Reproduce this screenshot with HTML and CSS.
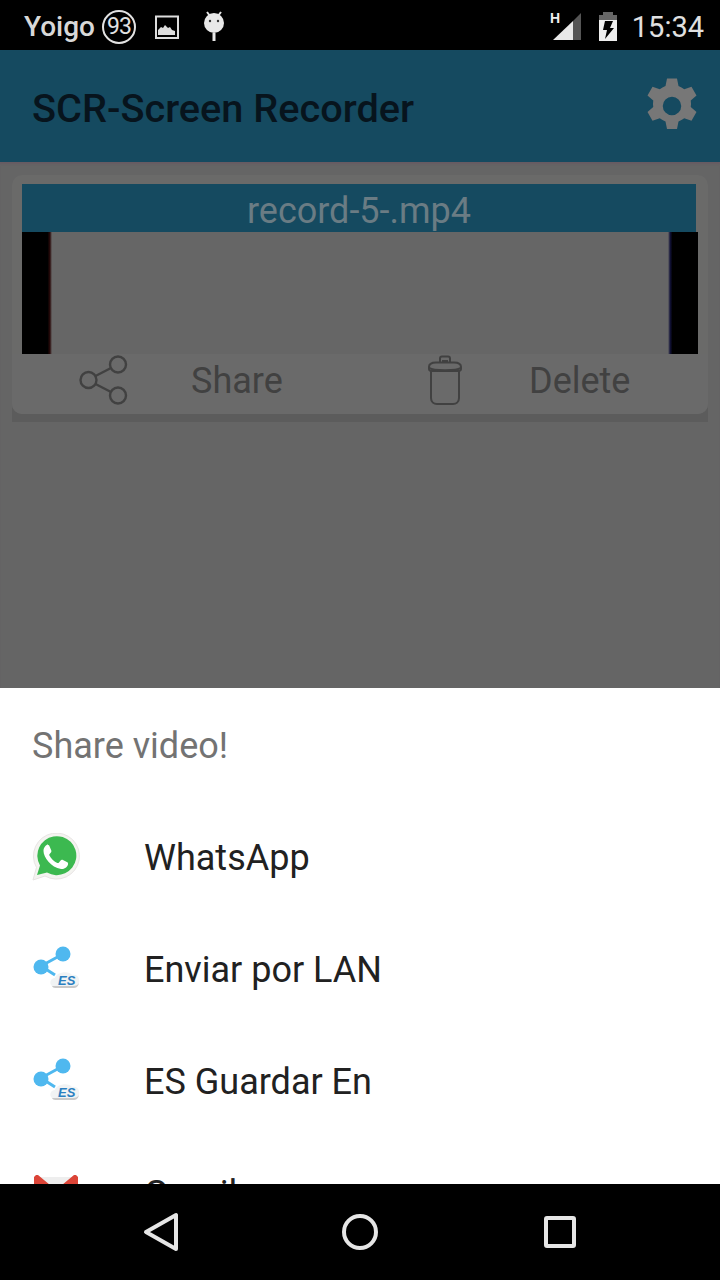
FILE: index.html
```html
<!DOCTYPE html>
<html lang="en">
<head>
<meta charset="utf-8">
<title>SCR-Screen Recorder</title>
<link rel="stylesheet" href="styles.css">
</head>
<body>
<div class="screen">
  <header class="status">
    <div class="status-left">
      <span class="carrier">Yoigo</span>
      <span class="badge">93</span>
      <svg class="ic-pic" width="24" height="24" viewBox="0 0 24 24"><rect x="1" y="1.500" width="22" height="21.500" fill="none" stroke="#ddd" stroke-width="2"/><path d="M3 20v-5l3-3 2 1 2-3 3 3 2-1 2 3 3 1v4z" fill="#ddd"/></svg>
      <svg class="ic-droid" width="24" height="32" viewBox="0 0 24 32"><path d="M5 1l3 4M19 1l-3 4" stroke="#e4e4e4" stroke-width="2"/><circle cx="12" cy="12" r="10" fill="#e8e8e8"/><circle cx="8" cy="10" r="1.200" fill="#333"/><circle cx="16" cy="10" r="1.200" fill="#333"/><rect x="10.500" y="22" width="3" height="8" fill="#e8e8e8"/></svg>
    </div>
    <div class="status-right">
      <svg class="ic-signal" width="32" height="34" viewBox="0 -4 32 34"><text x="0" y="11" class="h-mark">H</text><path d="M3 28L23 9v19z" fill="#e8e8e8"/><path d="M23 9l8-8v27h-8z" fill="#555"/></svg>
      <svg class="ic-batt" width="20" height="30" viewBox="0 0 20 30"><path d="M5 0h10v3H5zM1 3h18v5H1z" fill="#666"/><rect x="1" y="8" width="18" height="21" fill="#eee"/><path d="M7 9h8l-3 7h4L7 27l2-9H5z" fill="#000"/></svg>
      <span class="clock">15:34</span>
    </div>
  </header>

  <div class="appbar">
    <h1 class="app-title">SCR-Screen Recorder</h1>
    <svg class="ic-gear" width="60" height="60" viewBox="0 0 24 24"><path fill="#777" fill-rule="evenodd" d="M10 1h4l.6 3a8.500 8.500 0 0 1 2.300 1.300l2.900-1 2 3.500-2.300 2a8.500 8.500 0 0 1 0 2.600l2.300 2-2 3.500-2.900-1a8.500 8.500 0 0 1-2.300 1.300l-.6 3h-4l-.6-3a8.500 8.500 0 0 1-2.300-1.300l-2.900 1-2-3.500 2.300-2a8.500 8.500 0 0 1 0-2.600l-2.300-2 2-3.500 2.900 1A8.500 8.500 0 0 1 9.400 4zM12 8.300a3.700 3.700 0 1 0 0 7.400 3.700 3.700 0 0 0 0-7.400z"/></svg>
  </div>

  <main class="content">
    <article class="card">
      <div class="file-name">record-5-.mp4</div>
      <div class="video">
        <div class="bar bar-l"></div>
        <div class="bar bar-r"></div>
      </div>
      <div class="actions">
        <div class="action action-share">
          <svg width="50" height="50" viewBox="0 0 50 50" fill="none" stroke="#414141" stroke-width="2.400"><circle cx="39" cy="9.500" r="8"/><circle cx="39" cy="40.500" r="8"/><circle cx="9.500" cy="25" r="8"/><path d="M16.500 21L32 13M16.500 29L32 37"/></svg>
          <span class="action-label">Share</span>
        </div>
        <div class="action action-delete">
          <svg width="38" height="50" viewBox="0 0 38 50" fill="none" stroke="#414141" stroke-width="2"><path d="M14 8V3.500a2 2 0 0 1 2-2h6a2 2 0 0 1 2 2V8"/><rect x="16" y="5" width="6" height="2.500" fill="#414141" stroke="none"/><path d="M3 12c0-3 3-4.500 7-4.500h18c4 0 7 1.500 7 4.500v2c0 1-1 2-3 2H6c-2 0-3-1-3-2z"/><path d="M3.500 13c3 3 28 3 31 0"/><path d="M5 16v27c0 4 3 6 6 6h16c3 0 6-2 6-6V16"/></svg>
          <span class="action-label">Delete</span>
        </div>
      </div>
    </article>
    <div class="card-shadow"></div>
  </main>

  <section class="sheet">
    <h2 class="sheet-title">Share video!</h2>
    <ul class="app-list">
      <li class="app-row">
        <svg class="app-icon" width="48" height="48" viewBox="0 0 48 48"><path d="M1 47l3.500-12.500A23 23 0 1 1 13 43z" fill="#f4f4f0" stroke="#e8e4e4" stroke-width="1"/><path d="M5 42l3-9.500A19.500 19.500 0 1 1 15 39.500z" fill="#3cb950"/><path d="M16 11.500c-1.500 0-4.500 2.500-4.500 6.500 0 6 7.500 16.500 17.500 18 4 .5 6.500-2.500 7-4.500.3-1 0-1.800-.7-2.200l-4.800-2.500c-.8-.3-1.400 0-1.900.6l-1.800 2.300c-.4.400-.9.500-1.500.2-3-1.300-6.300-4.300-7.900-7.500-.3-.6-.1-1 .2-1.400l1.500-1.800c.4-.5.400-1 .2-1.600l-2-4.900c-.3-.8-.9-.9-1.300-.7z" fill="#fff"/></svg>
        <span class="app-name">WhatsApp</span>
      </li>
      <li class="app-row">
        <svg class="app-icon" width="48" height="48" viewBox="0 0 48 48"><path d="M31 9L9 21l14 9" fill="none" stroke="#4fb8ef" stroke-width="3"/><circle cx="31" cy="9" r="7.500" fill="#4fb8ef"/><circle cx="9" cy="22" r="7.500" fill="#4fb8ef"/><path d="M20 41c-3-2-2-8 3-8 1-6 14-8 17-3 6-1 8 4 7 8-1 4-3 5-6 5H25c-2 0-4 0-5-2z" fill="#f1f3f4"/><path d="M20 41c1 2 3 2 5 2h16c3 0 5-1 6-5-1 2-3 3-6 3H25c-2 0-4 0-5 0z" fill="#c9c9c9"/><text x="26" y="40" class="es-mark">ES</text></svg>
        <span class="app-name">Enviar por LAN</span>
      </li>
      <li class="app-row">
        <svg class="app-icon" width="48" height="48" viewBox="0 0 48 48"><path d="M31 9L9 21l14 9" fill="none" stroke="#4fb8ef" stroke-width="3"/><circle cx="31" cy="9" r="7.500" fill="#4fb8ef"/><circle cx="9" cy="22" r="7.500" fill="#4fb8ef"/><path d="M20 41c-3-2-2-8 3-8 1-6 14-8 17-3 6-1 8 4 7 8-1 4-3 5-6 5H25c-2 0-4 0-5-2z" fill="#f1f3f4"/><path d="M20 41c1 2 3 2 5 2h16c3 0 5-1 6-5-1 2-3 3-6 3H25c-2 0-4 0-5 0z" fill="#c9c9c9"/><text x="26" y="40" class="es-mark">ES</text></svg>
        <span class="app-name">ES Guardar En</span>
      </li>
      <li class="app-row">
        <svg class="app-icon" width="48" height="48" viewBox="0 0 48 48"><path d="M3 8h42v36H3z" fill="#eee"/><path d="M2 8l2-2h2l18 15L42 6h2l2 2v36h-7V18L24 30 9 18v26H2z" fill="#db4437"/></svg>
        <span class="app-name">Gmail</span>
      </li>
    </ul>
  </section>

  <nav class="navbar">
    <svg width="36" height="40" viewBox="0 0 36 40" fill="none" stroke="#e6e6e6" stroke-width="4" stroke-linejoin="round"><path d="M33 3v34L3 20z"/></svg>
    <span class="nav-circle"></span>
    <span class="nav-square"></span>
  </nav>
</div>
</body>
</html>
```
FILE: styles.css
```css
* { box-sizing: border-box; }
html, body { margin: 0; padding: 0; }
body { background: #000; font-family: Roboto, "Liberation Sans", sans-serif; }
.screen { width: 720px; height: 1280px; display: flex; flex-direction: column; overflow: hidden; }

.status { height: 50px; background: #000; color: #d8d8d8; display: flex; justify-content: space-between; align-items: center; padding: 3px 16px 0 24px; flex: none; }
.status-left, .status-right { display: flex; align-items: center; }
.carrier { font-size: 28px; font-weight: 500; }
.badge { width: 34px; height: 34px; margin-left: 7px; border: 2px solid #e2e2e2; border-radius: 50%; font-size: 23px; letter-spacing: -1px; display: flex; align-items: center; justify-content: center; color: #e2e2e2; }
.ic-pic { margin-left: 19px; }
.ic-droid { margin-left: 23px; }
.ic-signal { margin-top: -4px; }
.h-mark { font: 700 14px "Liberation Sans", sans-serif; fill: #eee; }
.ic-batt { margin-left: 16px; }
.clock { font-size: 29px; margin-left: 14px; color: #e0e0e0; }

.appbar { height: 112px; background: #154a60; display: flex; align-items: center; justify-content: space-between; padding: 0 18px 0 32px; flex: none; }
.app-title { margin: 0; padding-top: 4px; font-size: 39.700px; font-weight: 500; color: #07141d; }

.content { height: 526px; background: #656565; padding: 13px 12px 0; flex: none; box-shadow: inset 0 3px 2px -1px #675b63; }
.card { height: 239px; background: #6a6a69; border-radius: 10px; padding: 9px 10px 0; display: flex; flex-direction: column; position: relative; z-index: 1; }
.file-name { height: 48px; margin-right: 2px; background: #154a60; color: #6a7c84; font-size: 36px; text-align: center; line-height: 55px; overflow: hidden; }
.video { height: 122px; background: #666; display: flex; justify-content: space-between; }
.bar { width: 30px; }
.bar-l { background: linear-gradient(90deg, #000 85%, #2a0a0a 93%, #666); }
.bar-r { background: linear-gradient(270deg, #000 85%, #12123a 93%, #666); }
.actions { flex: 1; display: flex; margin: 0 -10px; padding-bottom: 8px; background: #6a6a6a; border-radius: 0 0 10px 10px; }
.action { display: flex; align-items: center; color: #414141; font-size: 36px; }
.action-label { padding-top: 2px; }
.action-share { padding-left: 67px; width: 348px; }
.action-share .action-label { margin-left: 62px; }
.action-delete { padding-left: 66px; }
.action-delete .action-label { margin-left: 65px; }
.card-shadow { height: 18px; margin-top: -10px; background: #5c5c5c; }

.sheet { height: 496px; background: #fff; overflow: hidden; flex: none; }
.sheet-title { margin: 0; height: 113px; padding: 33px 32px 0; font-size: 36px; line-height: 50px; font-weight: 400; color: #737373; }
.app-list { list-style: none; margin: 0; padding: 0; }
.app-row { height: 112px; display: flex; align-items: center; padding-left: 32px; }
.app-icon { flex: none; }
.app-name { margin-left: 64px; padding-top: 2px; font-size: 36px; color: #212121; }
.es-mark { font: italic 700 13px "Liberation Sans", sans-serif; fill: #2b7fc0; }

.navbar { height: 96px; background: #000; display: flex; align-items: center; padding-left: 143px; flex: none; }
.nav-circle { width: 36px; height: 36px; border: 4px solid #e6e6e6; border-radius: 50%; margin-left: 163px; }
.nav-square { width: 32px; height: 32px; border: 4px solid #e6e6e6; border-radius: 3px; margin-left: 166px; }
```
